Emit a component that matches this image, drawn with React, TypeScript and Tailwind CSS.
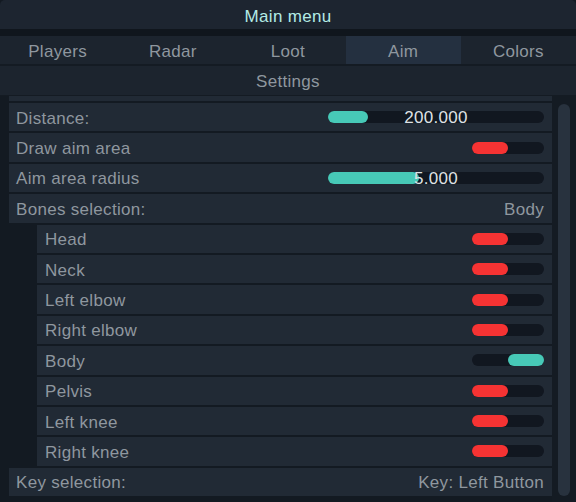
import React from "react";

type Item =
  | { kind: "slider"; label: string; value: string; fill: number }
  | { kind: "toggle"; label: string; on: boolean }
  | { kind: "text"; label: string; right: string };

const topItems: Item[] = [
  { kind: "slider", label: "Distance:", value: "200.000", fill: 18.5 },
  { kind: "toggle", label: "Draw aim area", on: false },
  { kind: "slider", label: "Aim area radius", value: "5.000", fill: 42 },
  { kind: "text", label: "Bones selection:", right: "Body" },
];

const bones: { label: string; on: boolean }[] = [
  { label: "Head", on: false },
  { label: "Neck", on: false },
  { label: "Left elbow", on: false },
  { label: "Right elbow", on: false },
  { label: "Body", on: true },
  { label: "Pelvis", on: false },
  { label: "Left knee", on: false },
  { label: "Right knee", on: false },
];

const tabs = ["Players", "Radar", "Loot", "Aim", "Colors"];

function Toggle({ on }: { on: boolean }) {
  return (
    <div className={`flex h-[12px] w-[72px] rounded-full bg-[#111720] ${on ? "justify-end" : "justify-start"}`}>
      <div className={`h-full w-[36px] rounded-full ${on ? "bg-[#47c9b7]" : "bg-[#f63333]"}`} />
    </div>
  );
}

function Slider({ value, fill }: { value: string; fill: number }) {
  return (
    <div className="relative flex h-[12px] w-[216px] items-center rounded-full bg-[#111720]">
      <div className="h-full rounded-full bg-[#47c9b7]" style={{ width: `${fill}%` }} />
      <span className="absolute inset-0 flex items-center justify-center pt-[1px] text-[#dfe2e5]">{value}</span>
    </div>
  );
}

function Row({ item }: { item: Item }) {
  return (
    <div className="flex h-[28.4px] items-center justify-between bg-[#212a35] pl-[7px] pr-[8px]">
      <span className="pt-[2px]">{item.label}</span>
      {item.kind === "slider" && <Slider value={item.value} fill={item.fill} />}
      {item.kind === "toggle" && <Toggle on={item.on} />}
      {item.kind === "text" && <span className="pt-[2px]">{item.right}</span>}
    </div>
  );
}

export default function App() {
  return (
    <div
      className="flex h-[502px] w-[576px] flex-col overflow-hidden bg-[#131a22] text-[17px] leading-none tracking-[0.3px] text-[#8f979f]"
      style={{ fontFamily: '"Liberation Sans", Arial, sans-serif' }}
    >
      <div className="flex h-[29px] shrink-0 items-center justify-center rounded-t-[5px] bg-[#1d2530] pt-[4px] text-[#b3ebe5]">
        Main menu
      </div>
      <div className="h-[7px] shrink-0 bg-[#10161d]" />
      <div className="grid h-[28px] shrink-0 grid-cols-5 bg-[#1c242e]">
        {tabs.map((t) => (
          <div
            key={t}
            className={`flex items-center justify-center pt-[2px] ${t === "Aim" ? "bg-[#243040]" : ""}`}
          >
            {t}
          </div>
        ))}
      </div>
      <div className="h-[2px] shrink-0 bg-[#141b23]" />
      <div className="flex h-[29px] shrink-0 items-center justify-center bg-[#1c242e] pt-[2px]">Settings</div>
      <div className="h-[1px] shrink-0 bg-[#141b23]" />

      <div className="flex min-h-0 flex-1">
        <div className="min-w-0 flex-1 overflow-hidden pl-[9px]">
          <div className="flex flex-col gap-[2px]">
            {/* previous row, scrolled mostly out of view */}
            <div className="h-[5px] bg-[#212a35]" />
            {topItems.map((it) => (
              <Row key={it.label} item={it} />
            ))}
            <div className="flex flex-col gap-[2px] pl-[28px]">
              {bones.map((b) => (
                <div
                  key={b.label}
                  className="flex h-[28.4px] items-center justify-between bg-[#212a35] pl-[8px] pr-[8px]"
                >
                  <span className="pt-[2px]">{b.label}</span>
                  <Toggle on={b.on} />
                </div>
              ))}
            </div>
            <Row item={{ kind: "text", label: "Key selection:", right: "Key: Left Button" }} />
          </div>
        </div>
        <div className="flex w-[24px] shrink-0 justify-center bg-[#141b23] pt-[8px] pb-[6px]">
          <div className="w-[12px] rounded-full bg-[#28323e]" />
        </div>
      </div>
    </div>
  );
}
